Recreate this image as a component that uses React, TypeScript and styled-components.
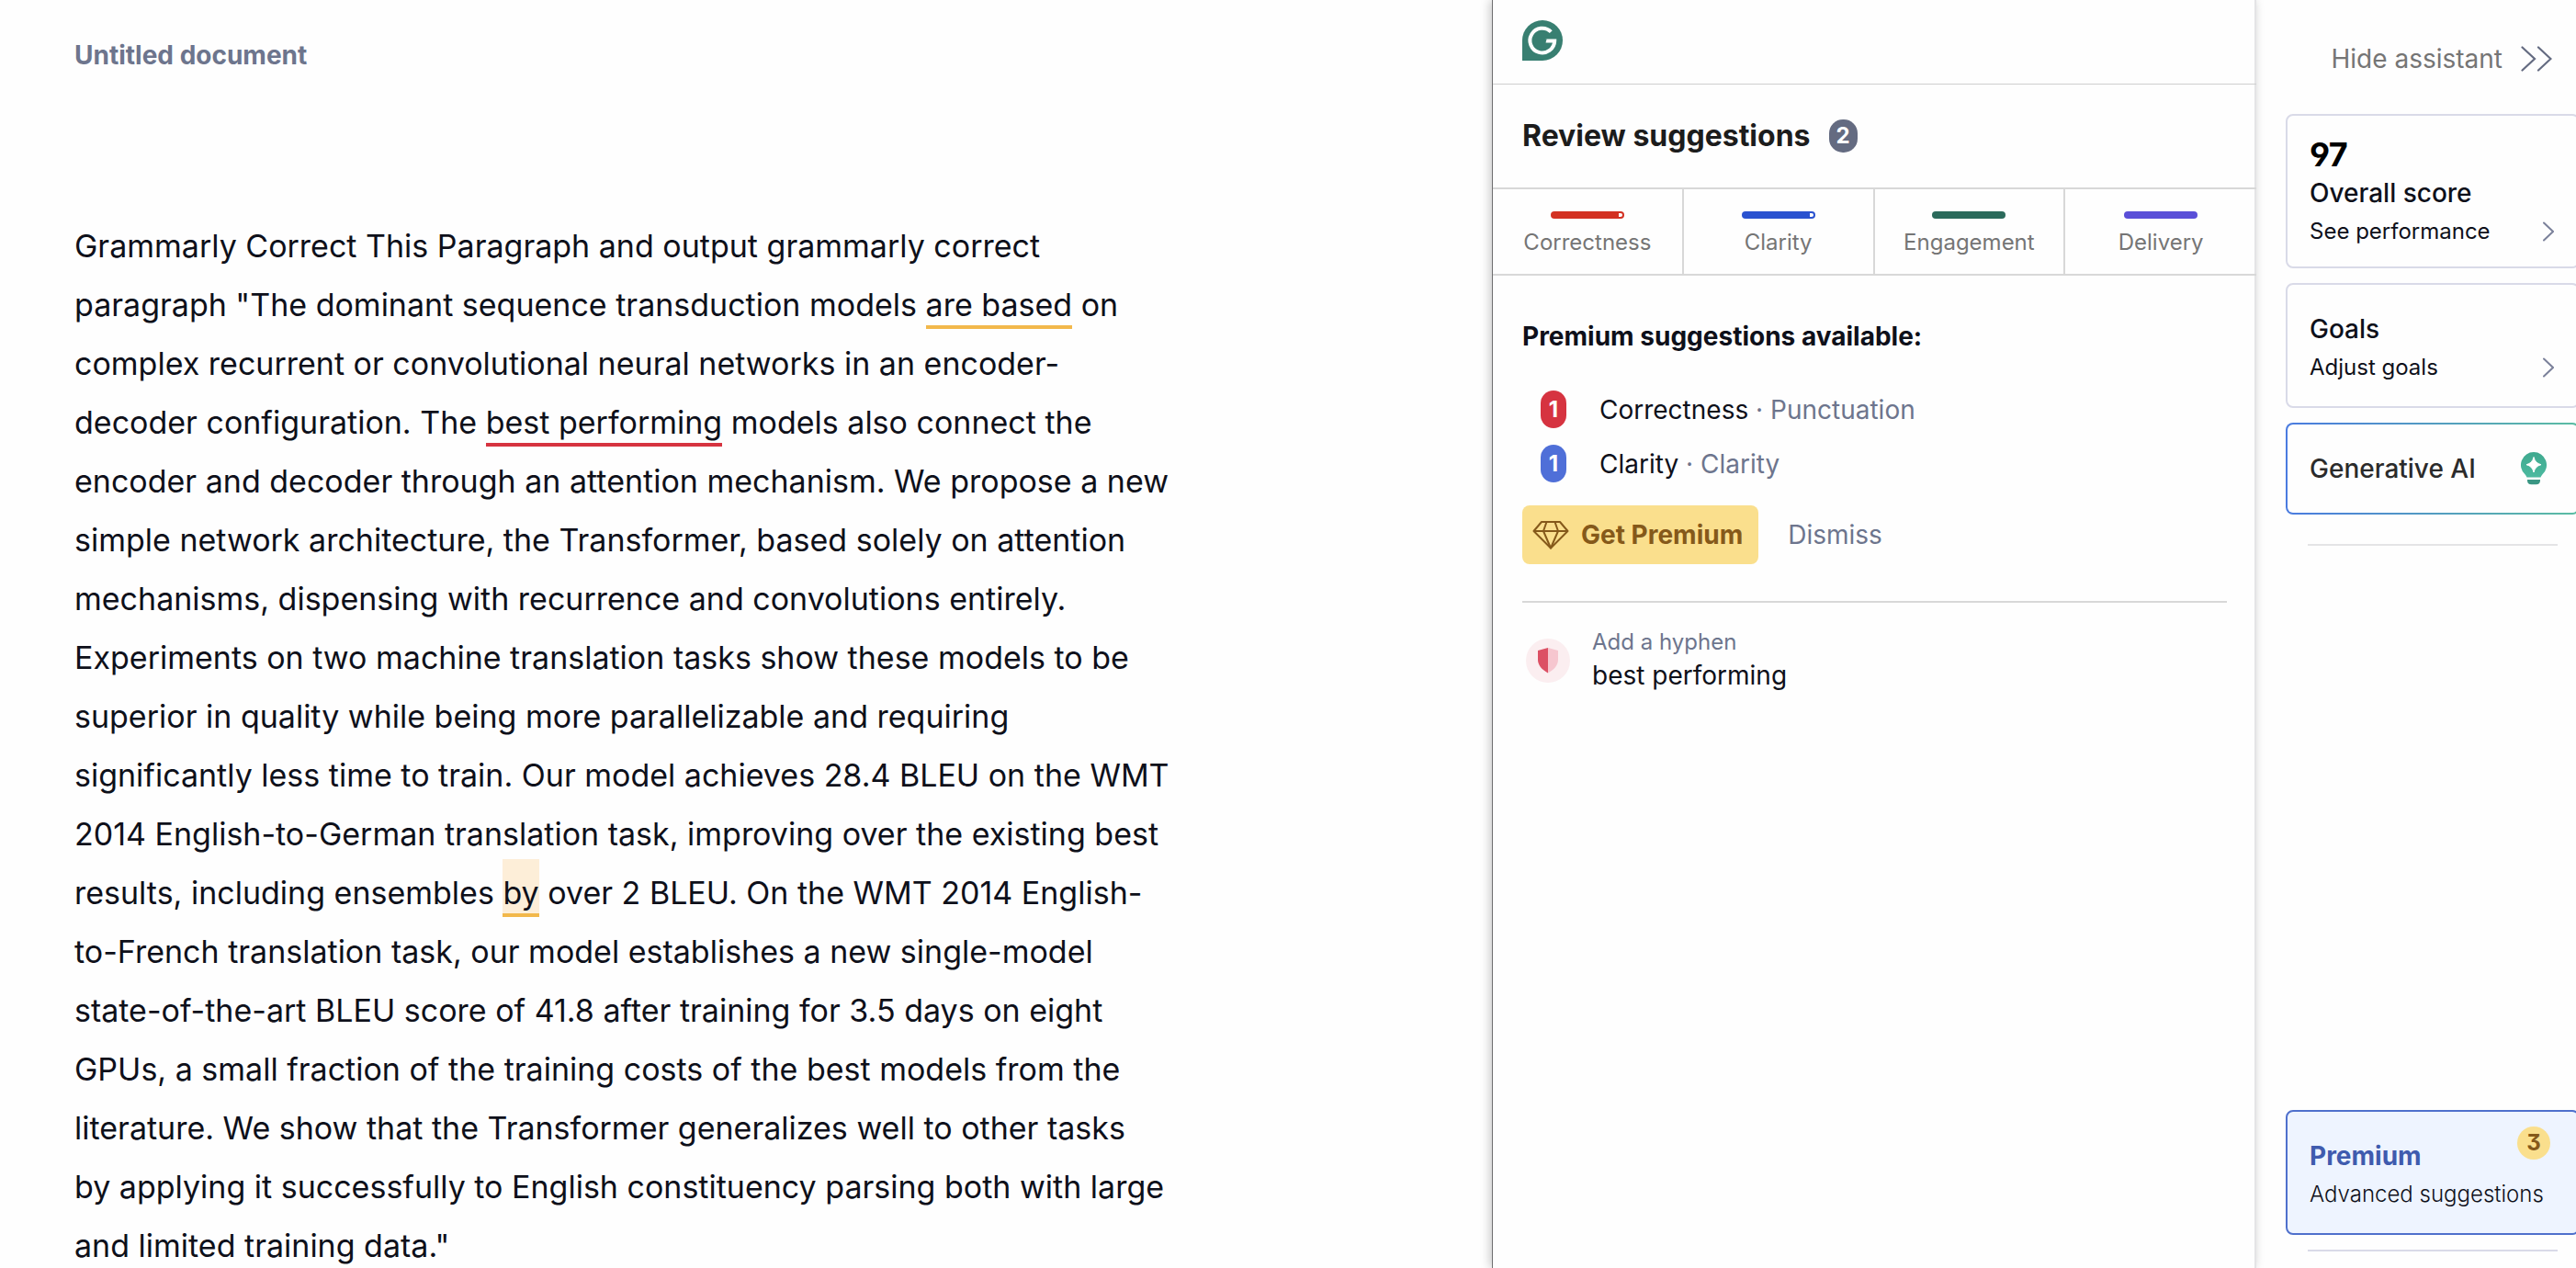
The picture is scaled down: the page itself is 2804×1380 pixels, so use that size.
import React from "react";
import styled, { createGlobalStyle } from "styled-components";

const GlobalStyle = createGlobalStyle`
  *, *::before, *::after { box-sizing: border-box; }
  body {
    margin: 0;
    background: #fefefe;
    color: #0e101a;
    font-family: Inter, "Liberation Sans", sans-serif;
    font-size: 28px;
    line-height: 40px;
  }
  button, input { font: inherit; color: inherit; }
  button { border: 0; padding: 0; background: none; text-align: left; cursor: pointer; }
  h2, h3, p, ul { margin: 0; padding: 0; }
`;

const Layout = styled.div`
  display: grid;
  grid-template-columns: minmax(0, 1fr) 832px 348px;
  height: 100vh;
  overflow: hidden;
`;

const Editor = styled.main`
  min-width: 0;
  padding: 40px 80px 0 81px;
  overflow: hidden;
`;

const DocumentTitle = styled.input`
  display: block;
  width: 100%;
  height: 40px;
  margin-bottom: 156px;
  padding: 0;
  border: 0;
  outline: 0;
  background: none;
  color: #6d758d;
  font-weight: 700;
`;

const Paragraph = styled.p`
  max-width: 1200px;
  font-size: 34px;
  line-height: 64px;
`;

const Mark = styled.mark<{ $color: string; $fill?: string }>`
  padding: ${(p) => (p.$fill ? "16px 0 2px" : "0 0 2px")};
  border-bottom: 4px solid ${(p) => p.$color};
  background: ${(p) => p.$fill ?? "transparent"};
  color: inherit;
`;

const Assistant = styled.section`
  border-left: 1px solid #6f6f70;
  border-right: 2px solid #e4e4e6;
  box-shadow: -2px 0 10px rgba(0, 0, 0, 0.22);
`;

const LogoBar = styled.header`
  display: flex;
  margin-right: -2px;
  padding: 22px 32px 25px;
  border-bottom: 1px solid #cfcfcf;
  svg { display: block; }
`;

const TitleRow = styled.div`
  display: flex;
  align-items: center;
  gap: 20px;
  height: 112px;
  padding: 0 32px;
`;

const Title = styled.h2`
  color: #1c1c1c;
  font-size: 32px;
  font-weight: 700;
`;

const TotalBadge = styled.span`
  display: flex;
  align-items: center;
  justify-content: center;
  width: 31px;
  height: 36px;
  border-radius: 15px;
  background: #646b81;
  color: #fff;
  font-size: 24px;
  font-weight: 700;
`;

const Categories = styled.nav`
  display: grid;
  grid-template-columns: repeat(4, 1fr);
  margin-right: -2px;
  border-top: 2px solid #d8d8d8;
  border-bottom: 2px solid #d8d8d8;
`;

const Category = styled.button`
  display: flex;
  flex-direction: column;
  align-items: center;
  gap: 10px;
  padding: 24px 0 18px;
  color: #757575;
  font-size: 24px;
  line-height: 32px;
  &:not(:last-child) { border-right: 2px solid #d8d8d8; }
`;

const Meter = styled.span<{ $color: string; $open?: boolean }>`
  display: flex;
  justify-content: flex-end;
  width: 80px;
  height: 8px;
  padding: 2px;
  border-radius: 4px;
  background: ${(p) => p.$color};
  &::after {
    content: "";
    width: 4px;
    border-radius: 0 2px 2px 0;
    background: ${(p) => (p.$open ? "#fff" : "transparent")};
  }
`;

const Body = styled.div`
  padding: 46px 30px 0 32px;
`;

const SectionTitle = styled.h3`
  margin-bottom: 30px;
  font-size: 28px;
  font-weight: 700;
`;

const PremiumList = styled.ul`
  list-style: none;
`;

const PremiumItem = styled.li`
  display: flex;
  align-items: center;
  gap: 36px;
  height: 59px;
  padding-left: 20px;
`;

const CountBadge = styled.span<{ $color: string }>`
  display: flex;
  align-items: center;
  justify-content: center;
  width: 28px;
  height: 41px;
  border-radius: 14px;
  background: ${(p) => p.$color};
  color: #fff;
  font-size: 24px;
  font-weight: 700;
`;

const Muted = styled.span`
  color: #6d758d;
`;

const Actions = styled.div`
  display: flex;
  align-items: center;
  gap: 32px;
  padding: 16px 0 40px;
  border-bottom: 2px solid #d8d8d8;
`;

const PremiumButton = styled.button`
  display: flex;
  align-items: center;
  gap: 13px;
  height: 64px;
  padding: 0 17px 0 11px;
  border-radius: 8px;
  background: #fadf8d;
  color: #85591a;
  font-weight: 700;
`;

const DismissButton = styled.button`
  color: #6d758d;
`;

const SuggestionCard = styled.button`
  display: flex;
  align-items: center;
  gap: 24px;
  width: 100%;
  padding: 27px 4px;
`;

const SuggestionIcon = styled.span`
  display: flex;
  align-items: center;
  justify-content: center;
  width: 48px;
  height: 48px;
  border-radius: 50%;
  background: #fbeef0;
`;

const SuggestionText = styled.span`
  display: flex;
  flex-direction: column;
`;

const Hint = styled.span`
  color: #6d758d;
  font-size: 24px;
  line-height: 32px;
`;

const Sidebar = styled.aside`
  display: flex;
  flex-direction: column;
  padding: 44px 0 18px 32px;
  overflow: hidden;
`;

const HideButton = styled.button`
  display: flex;
  align-items: center;
  justify-content: flex-end;
  gap: 20px;
  margin-bottom: 40px;
  padding-right: 26px;
  color: #757575;
`;

/* Cards run slightly past the edge of the window. */
const Card = styled.button<{ $padding: string }>`
  position: relative;
  flex: none;
  margin: 0 -4px 16px 0;
  padding: ${(p) => p.$padding};
  border: 2px solid #d9dae8;
  border-radius: 8px;
`;

const GenerativeCard = styled(Card)`
  display: flex;
  align-items: center;
  justify-content: space-between;
  border-color: transparent;
  background:
    linear-gradient(#fefefe, #fefefe) padding-box,
    linear-gradient(90deg, #4a7be0, #5bbda2) border-box;
  color: #2b2b2b;
  font-weight: 500;
`;

const PremiumCard = styled(Card)`
  margin-top: auto;
  border-color: #4f70cc;
  background: #eef4ff;
`;

const Score = styled.span`
  display: block;
  color: #000;
  font-size: 36px;
  font-weight: 700;
  line-height: 44px;
  font-feature-settings: "ss01";
`;

const CardTitle = styled.span`
  display: block;
  font-weight: 500;
`;

const PremiumTitle = styled(CardTitle)`
  color: #3f5bae;
  font-weight: 700;
`;

const CardLink = styled.span<{ $light?: boolean }>`
  display: flex;
  align-items: center;
  justify-content: space-between;
  font-size: 24px;
  font-weight: ${(p) => (p.$light ? 300 : 400)};
  line-height: 44px;
`;

const PremiumBadge = styled.span`
  position: absolute;
  top: 16px;
  right: 30px;
  display: flex;
  align-items: center;
  justify-content: center;
  width: 36px;
  height: 36px;
  border-radius: 50%;
  background: #fadf8d;
  color: #85591a;
  font-size: 24px;
  font-weight: 700;
  font-feature-settings: "cv09";
`;

const Rule = styled.hr<{ $color: string }>`
  flex: none;
  width: 272px;
  height: 2px;
  margin: 0 0 0 24px;
  border: 0;
  background: ${(p) => p.$color};
`;

const RuleGap = styled.div`
  padding-top: 16px;
`;

function Logo() {
  return (
    <svg width="44" height="44" viewBox="0 0 44 44" role="img" aria-label="Grammarly">
      <path d="M22 0a22 22 0 0 1 0 44H0V22A22 22 0 0 1 22 0z" fill="#387f71" />
      <path d="M31.3 12.6A13.4 13.4 0 1 0 35.2 22.6H25.6" fill="none" stroke="#fff" strokeWidth="4" />
      <path d="M26.9 20.5L24.8 24.7V20.5z" fill="#387f71" />
    </svg>
  );
}

function Diamond() {
  return (
    <svg width="40" height="32" viewBox="0 0 40 32" fill="none" stroke="#85591a" strokeWidth="2" strokeLinejoin="round" aria-hidden="true">
      <path d="M10 2H30L38.5 12L20 30.5L1.500 12z" />
      <path d="M1.500 12H38.5M15.500 2L12 12L20 30.5L28 12L24.500 2" />
    </svg>
  );
}

function Shield() {
  return (
    <svg width="22" height="28" viewBox="0 0 22 28" aria-hidden="true">
      <path d="M11 0L0 3V13C0 19 4.500 24 11 27.500z" fill="#dc5064" />
      <path d="M11 0L22 3V13C22 19 17.500 24 11 27.500z" fill="#f6c6cf" />
    </svg>
  );
}

function DoubleChevron() {
  return (
    <svg width="34" height="28" viewBox="0 0 34 28" fill="none" stroke="#646b81" strokeWidth="2.200" strokeLinecap="round" aria-hidden="true">
      <path d="M1.500 1.500L15 14L1.500 26.500M19 1.500L32.500 14L19 26.500" />
    </svg>
  );
}

function Chevron() {
  return (
    <svg width="12" height="22" viewBox="0 0 12 22" fill="none" stroke="#7b819a" strokeWidth="2" strokeLinecap="round" aria-hidden="true">
      <path d="M1 1.500L11 11L1 20.500" />
    </svg>
  );
}

function Bulb() {
  return (
    <svg width="28" height="36" viewBox="0 0 28 36" aria-hidden="true">
      <defs>
        <linearGradient id="bulb" x1="0" y1="0" x2="0" y2="1">
          <stop offset="0" stopColor="#3fa98f" />
          <stop offset="1" stopColor="#4cb99f" />
        </linearGradient>
      </defs>
      <path d="M14 0A14 14 0 0 1 23.500 24.300Q22 26 21.500 27.400H6.500Q6 26 4.500 24.300A14 14 0 0 1 14 0z" fill="url(#bulb)" />
      <path d="M14 5.500Q15.500 12.200 22 13.700Q15.500 15.200 14 22Q12.500 15.200 6 13.700Q12.500 12.200 14 5.500z" fill="#fff" stroke="#fff" strokeWidth="1" strokeLinejoin="round" />
      <path d="M7 30H21V31A4.500 4.500 0 0 1 16.500 35.300H11.500A4.500 4.500 0 0 1 7 31z" fill="#3a9683" />
    </svg>
  );
}

const categories = [
  { name: "Correctness", color: "#d33122", open: true },
  { name: "Clarity", color: "#2a52d0", open: true },
  { name: "Engagement", color: "#2b6a5b" },
  { name: "Delivery", color: "#5a4fd8" },
];

const premiumItems = [
  { name: "Correctness", detail: "Punctuation", color: "#d63340" },
  { name: "Clarity", detail: "Clarity", color: "#4f6fd8" },
];

export default function App() {
  return (
    <>
      <GlobalStyle />
      <Layout>
        <Editor>
          <DocumentTitle aria-label="Document title" defaultValue="Untitled document" />
          <Paragraph>
            Grammarly Correct This Paragraph and output grammarly correct paragraph "The dominant
            sequence transduction models <Mark $color="#f2b84b">are based</Mark> on complex
            recurrent or convolutional neural networks in an encoder-decoder configuration. The{" "}
            <Mark $color="#d63340">best performing</Mark> models also connect the encoder and
            decoder through an attention mechanism. We propose a new simple network architecture,
            the Transformer, based solely on attention mechanisms, dispensing with recurrence and
            convolutions entirely. Experiments on two machine translation tasks show these models
            to be superior in quality while being more parallelizable and requiring significantly
            less time to train. Our model achieves 28.4 BLEU on the WMT 2014 English-to-German
            translation task, improving over the existing best results, including ensembles{" "}
            <Mark $color="#f2b84b" $fill="#fdeed8">by</Mark> over 2 BLEU. On the WMT 2014
            English-to-French translation task, our model establishes a new single-model
            state-of-the-art BLEU score of 41.8 after training for 3.5 days on eight GPUs, a small
            fraction of the training costs of the best models from the literature. We show that
            the Transformer generalizes well to other tasks by&nbsp;applying it successfully to
            English constituency parsing both with large and limited training data."
          </Paragraph>
        </Editor>

        <Assistant>
          <LogoBar>
            <Logo />
          </LogoBar>
          <TitleRow>
            <Title>Review suggestions</Title>
            <TotalBadge>2</TotalBadge>
          </TitleRow>
          <Categories>
            {categories.map((c) => (
              <Category key={c.name} type="button">
                <Meter $color={c.color} $open={c.open} />
                {c.name}
              </Category>
            ))}
          </Categories>
          <Body>
            <SectionTitle>Premium suggestions available:</SectionTitle>
            <PremiumList>
              {premiumItems.map((item) => (
                <PremiumItem key={item.name}>
                  <CountBadge $color={item.color}>1</CountBadge>
                  <span>
                    {item.name} <Muted>· {item.detail}</Muted>
                  </span>
                </PremiumItem>
              ))}
            </PremiumList>
            <Actions>
              <PremiumButton type="button">
                <Diamond />
                Get Premium
              </PremiumButton>
              <DismissButton type="button">Dismiss</DismissButton>
            </Actions>
            <SuggestionCard type="button">
              <SuggestionIcon>
                <Shield />
              </SuggestionIcon>
              <SuggestionText>
                <Hint>Add a hyphen</Hint>
                best performing
              </SuggestionText>
            </SuggestionCard>
          </Body>
        </Assistant>

        <Sidebar>
          <HideButton type="button">
            Hide assistant
            <DoubleChevron />
          </HideButton>
          <Card type="button" $padding="20px 26px 16px 24px">
            <Score>97</Score>
            <CardTitle>Overall score</CardTitle>
            <CardLink>
              See performance
              <Chevron />
            </CardLink>
          </Card>
          <Card type="button" $padding="28px 26px 20px 24px">
            <CardTitle>Goals</CardTitle>
            <CardLink>
              Adjust goals
              <Chevron />
            </CardLink>
          </Card>
          <GenerativeCard type="button" $padding="28px 34px 28px 24px">
            Generative AI
            <Bulb />
          </GenerativeCard>
          <RuleGap>
            <Rule $color="#e4e4e6" />
          </RuleGap>
          <PremiumCard type="button" $padding="28px 26px 20px 24px">
            <PremiumTitle>Premium</PremiumTitle>
            <CardLink $light>Advanced suggestions</CardLink>
            <PremiumBadge>3</PremiumBadge>
          </PremiumCard>
          <Rule $color="#d9dae8" />
        </Sidebar>
      </Layout>
    </>
  );
}
